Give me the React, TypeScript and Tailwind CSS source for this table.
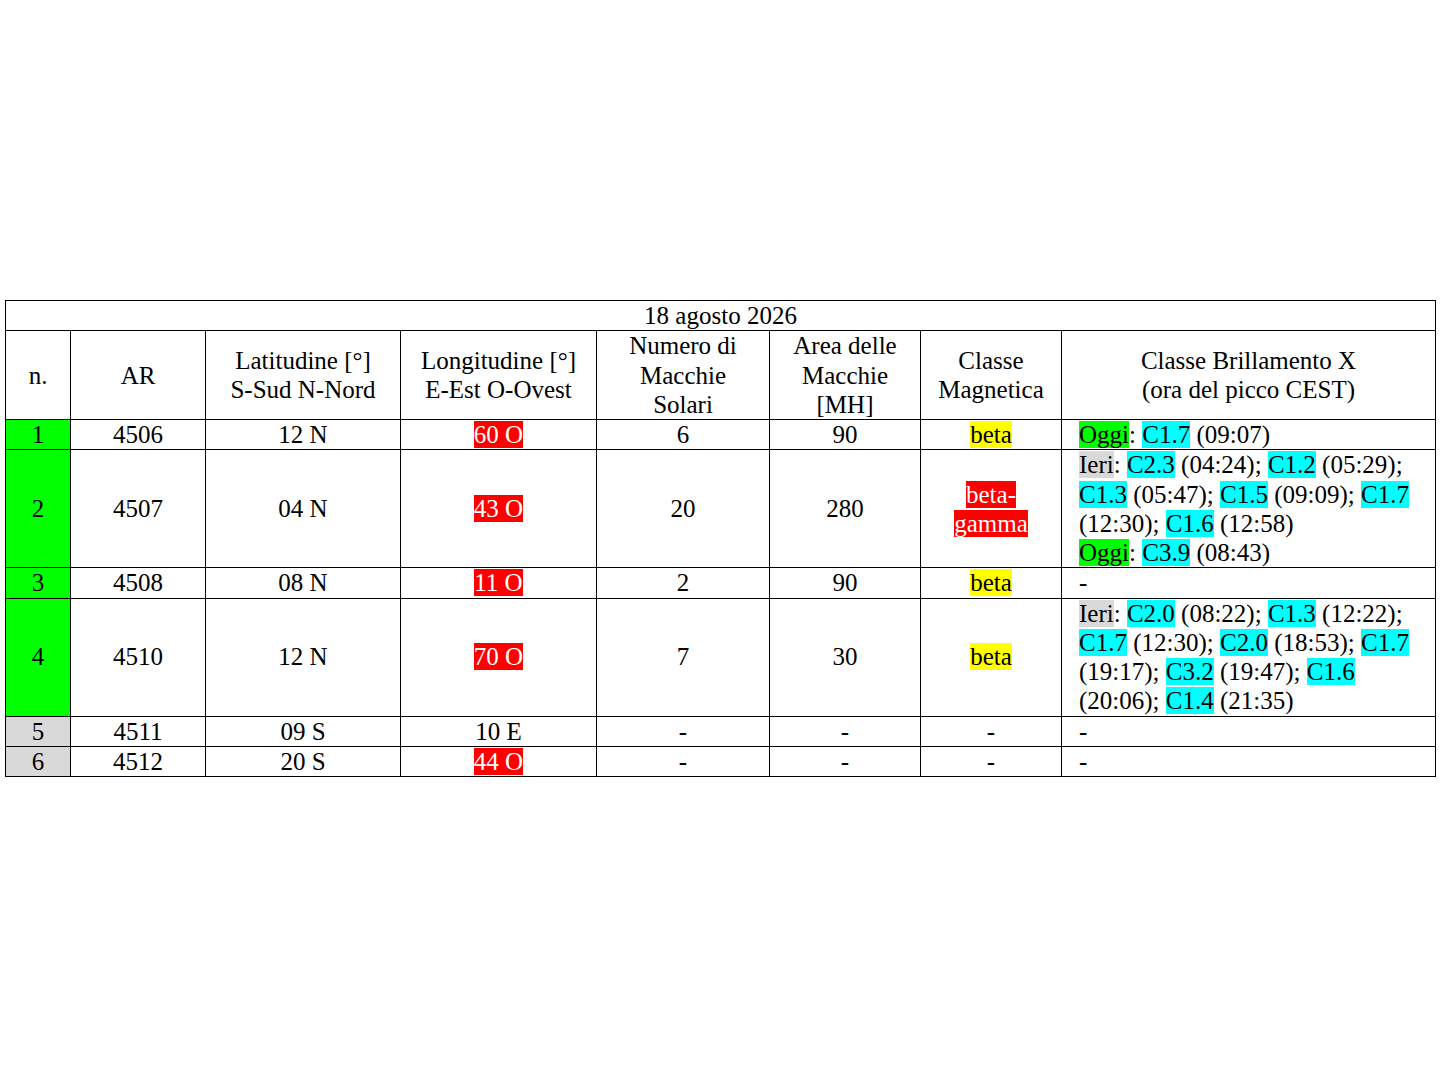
import React from 'react';

const G = ({ children }: { children: React.ReactNode }) => <span className="bg-[#00ff00]">{children}</span>;
const I = ({ children }: { children: React.ReactNode }) => <span className="bg-[#d9d9d9]">{children}</span>;
const C = ({ children }: { children: React.ReactNode }) => <span className="bg-[#00ffff]">{children}</span>;
const Red = ({ children }: { children: React.ReactNode }) => <span className="bg-[#ff0000] text-white">{children}</span>;
const Yel = ({ children }: { children: React.ReactNode }) => <span className="bg-[#ffff00]">{children}</span>;

const td = 'border border-black text-center align-middle p-0';

export default function App() {
    return (
        <main className="h-[1080px] pt-[300px] px-[5px] bg-white">
            <table
                className="w-[1431px] table-fixed border-collapse text-black text-[25px] leading-[29.25px]"
                style={{ fontFamily: '"Liberation Serif", "Times New Roman", serif' }}
            >
                <colgroup>
                    <col className="w-[65px]" />
                    <col className="w-[135px]" />
                    <col className="w-[195px]" />
                    <col className="w-[196px]" />
                    <col className="w-[173px]" />
                    <col className="w-[151px]" />
                    <col className="w-[141px]" />
                    <col />
                </colgroup>
                <tbody>
                    <tr>
                        <td colSpan={8} className={td}>18 agosto 2026</td>
                    </tr>
                    <tr>
                        <td className={td}>n.</td>
                        <td className={td}>AR</td>
                        <td className={td}>Latitudine [°]<br />S-Sud N-Nord</td>
                        <td className={td}>Longitudine [°]<br />E-Est O-Ovest</td>
                        <td className={td}>Numero di<br />Macchie<br />Solari</td>
                        <td className={td}>Area delle<br />Macchie<br />[MH]</td>
                        <td className={td}>Classe<br />Magnetica</td>
                        <td className={td}>Classe Brillamento X<br />(ora del picco CEST)</td>
                    </tr>

                    {/* 4506 */}
                    <tr>
                        <td className={`${td} bg-[#00ff00]`}>1</td>
                        <td className={td}>4506</td>
                        <td className={td}>12 N</td>
                        <td className={td}><Red>60 O</Red></td>
                        <td className={td}>6</td>
                        <td className={td}>90</td>
                        <td className={td}><Yel>beta</Yel></td>
                        <td className={`${td} !text-left pl-[17px]`}>
                            <G>Oggi</G>: <C>C1.7</C> (09:07)
                        </td>
                    </tr>

                    {/* 4507 */}
                    <tr>
                        <td className={`${td} bg-[#00ff00]`}>2</td>
                        <td className={td}>4507</td>
                        <td className={td}>04 N</td>
                        <td className={td}><Red>43 O</Red></td>
                        <td className={td}>20</td>
                        <td className={td}>280</td>
                        <td className={td}><Red>beta-</Red><br /><Red>gamma</Red></td>
                        <td className={`${td} !text-left pl-[17px]`}>
                            <I>Ieri</I>: <C>C2.3</C> (04:24); <C>C1.2</C> (05:29);<br />
                            <C>C1.3</C> (05:47); <C>C1.5</C> (09:09); <C>C1.7</C><br />
                            (12:30); <C>C1.6</C> (12:58)<br />
                            <G>Oggi</G>: <C>C3.9</C> (08:43)
                        </td>
                    </tr>

                    {/* 4508 */}
                    <tr>
                        <td className={`${td} bg-[#00ff00]`}>3</td>
                        <td className={td}>4508</td>
                        <td className={td}>08 N</td>
                        <td className={td}><Red>11 O</Red></td>
                        <td className={td}>2</td>
                        <td className={td}>90</td>
                        <td className={td}><Yel>beta</Yel></td>
                        <td className={`${td} !text-left pl-[17px]`}>-</td>
                    </tr>

                    {/* 4510 */}
                    <tr>
                        <td className={`${td} bg-[#00ff00]`}>4</td>
                        <td className={td}>4510</td>
                        <td className={td}>12 N</td>
                        <td className={td}><Red>70 O</Red></td>
                        <td className={td}>7</td>
                        <td className={td}>30</td>
                        <td className={td}><Yel>beta</Yel></td>
                        <td className={`${td} !text-left pl-[17px]`}>
                            <I>Ieri</I>: <C>C2.0</C> (08:22); <C>C1.3</C> (12:22);<br />
                            <C>C1.7</C> (12:30); <C>C2.0</C> (18:53); <C>C1.7</C><br />
                            (19:17); <C>C3.2</C> (19:47); <C>C1.6</C><br />
                            (20:06); <C>C1.4</C> (21:35)
                        </td>
                    </tr>

                    {/* 4511 */}
                    <tr>
                        <td className={`${td} bg-[#d9d9d9]`}>5</td>
                        <td className={td}>4511</td>
                        <td className={td}>09 S</td>
                        <td className={td}>10 E</td>
                        <td className={td}>-</td>
                        <td className={td}>-</td>
                        <td className={td}>-</td>
                        <td className={`${td} !text-left pl-[17px]`}>-</td>
                    </tr>

                    {/* 4512 */}
                    <tr>
                        <td className={`${td} bg-[#d9d9d9]`}>6</td>
                        <td className={td}>4512</td>
                        <td className={td}>20 S</td>
                        <td className={td}><Red>44 O</Red></td>
                        <td className={td}>-</td>
                        <td className={td}>-</td>
                        <td className={td}>-</td>
                        <td className={`${td} !text-left pl-[17px]`}>-</td>
                    </tr>
                </tbody>
            </table>
        </main>
    );
}
